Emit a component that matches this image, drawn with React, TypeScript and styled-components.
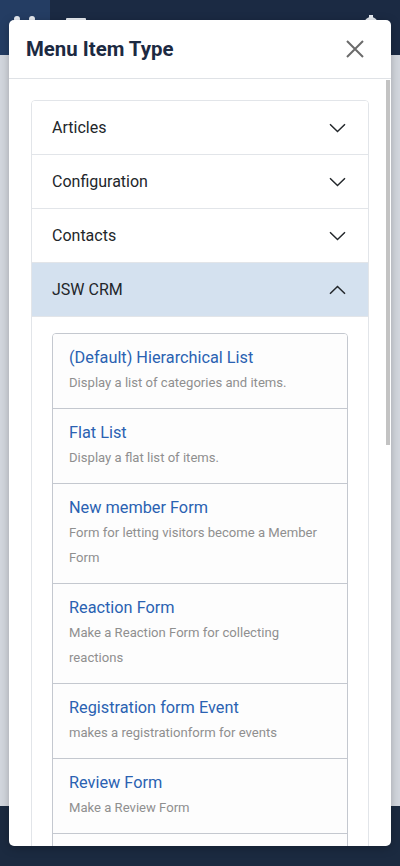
import React from "react";
import styled, { createGlobalStyle } from "styled-components";

const Global = createGlobalStyle`
  html, body { margin: 0; padding: 0; height: 866px; overflow: hidden; }
  body { font-family: Roboto, "Liberation Sans", Arial, sans-serif; }
  * { box-sizing: border-box; }
`;

const Page = styled.div`
  position: relative;
  width: 400px;
  height: 866px;
  display: flex;
  flex-direction: column;
  background: #d3d7de;
`;

const TopBar = styled.header`
  height: 55px;
  display: flex;
  align-items: flex-start;
  background: #1b2a43;
`;

const LogoBlock = styled.div`
  width: 50px;
  height: 100%;
  background: #243d63;
  display: flex;
  justify-content: center;
  padding-top: 15px;
`;

const TopSpacer = styled.div`
  flex: 1;
  display: flex;
  padding: 15px 0 0 14px;
`;

const GearSlot = styled.div`
  width: 50px;
  display: flex;
  justify-content: center;
  padding: 12px 8px 0 0;
`;

const Content = styled.main`
  flex: 1;
`;

const Footer = styled.footer`
  height: 60px;
  background: #1b2a40;
`;

const Modal = styled.div`
  position: absolute;
  top: 20px;
  left: 9px;
  width: 382px;
  height: 826px;
  background: #fff;
  border-radius: 5px;
  box-shadow: 0 2px 10px rgba(0, 0, 0, 0.25);
  display: flex;
  flex-direction: column;
  overflow: hidden;
`;

const ModalHeader = styled.div`
  height: 59px;
  flex: none;
  display: flex;
  align-items: center;
  justify-content: space-between;
  padding: 0 26px 0 17px;
  border-bottom: 1px solid #dfe2e6;
`;

const ModalTitle = styled.h2`
  margin: 0;
  font-size: 20.4px;
  font-weight: 700;
  color: #1c2a42;
`;

const CloseButton = styled.button`
  border: 0;
  background: none;
  padding: 0;
  width: 20px;
  height: 20px;
  display: flex;
  align-items: center;
  justify-content: center;
  cursor: pointer;
`;

const BodyFrame = styled.div`
  position: relative;
  flex: 1;
  min-height: 0;
  padding-right: 6px;
  overflow: hidden;
`;

const ModalBody = styled.div`
  height: 100%;
  overflow: hidden;
  padding: 21px 16px 20px 22px;
`;

const ScrollThumb = styled.div`
  position: absolute;
  top: 1px;
  right: 1px;
  width: 4px;
  height: 365px;
  background: #c3c3c3;
`;

const Accordion = styled.div`
  border: 1px solid #e2e5e9;
  border-radius: 4px;
  overflow: hidden;
`;

const Section = styled.div`
  & + & { border-top: 1px solid #e2e5e9; }
`;

const SectionHead = styled.div<{ $open?: boolean }>`
  height: 53px;
  display: flex;
  align-items: center;
  justify-content: space-between;
  padding: 0 22px 0 20px;
  background: ${(p) => (p.$open ? "#d4e1ef" : "#fff")};
  font-size: 16px;
  color: #22262a;
`;

const SectionBody = styled.div`
  padding: 16px 20px 17px 20px;
  border-top: 1px solid #e2e5e9;
`;

const ItemList = styled.div`
  border: 1px solid #c4c8cf;
  border-radius: 4px;
  overflow: hidden;
`;

const Item = styled.div`
  padding: 12px 16px 13px 16px;
  background: #fdfdfd;
  & + & { border-top: 1px solid #c4c8cf; }
`;

const ItemTitle = styled.div`
  font-size: 16.3px;
  line-height: 24px;
  color: #2a62b2;
`;

const ItemDesc = styled.div`
  font-size: 13.1px;
  line-height: 25px;
  color: #8f8f8f;
`;

const Chevron = ({ up }: { up?: boolean }) => (
  <svg width="17" height="10" viewBox="0 0 17 10" style={{ transform: up ? "rotate(180deg)" : undefined }}>
    <path d="M1 1.2 L8.5 8.5 L16 1.2" fill="none" stroke="#23272b" strokeWidth="1.5" />
  </svg>
);

const sections = ["Articles", "Configuration", "Contacts"];
const after = ["Menus", "News Feeds", "Smart Search", "System Links", "Tags", "Users", "Wrapper"];

const items = [
  { t: "(Default) Hierarchical List", d: "Display a list of categories and items." },
  { t: "Flat List", d: "Display a flat list of items." },
  { t: "New member Form", d: "Form for letting visitors become a Member Form" },
  { t: "Reaction Form", d: "Make a Reaction Form for collecting reactions" },
  { t: "Registration form Event", d: "makes a registrationform for events" },
  { t: "Review Form", d: "Make a Review Form" },
  { t: "Single Category", d: "Display a list of items of one category." },
  { t: "Single Item", d: "Display a single item." },
  { t: "Subscription Form", d: "Form for subscribing to the newsletter" },
  { t: "Unsubscribe Form", d: "Form for unsubscribing from the newsletter" },
];

export default function App() {
  return (
    <>
      <Global />
      <Page>
        <TopBar>
          <LogoBlock>
            <svg width="30" height="20" viewBox="0 0 30 20">
              <circle cx="7" cy="4" r="3" fill="#e8ecf2" />
              <circle cx="22" cy="4" r="3" fill="#e8ecf2" />
            </svg>
          </LogoBlock>
          <TopSpacer>
            <svg width="24" height="20" viewBox="0 0 24 20">
              <rect x="2" y="3" width="20" height="3" rx="1" fill="#e8ecf2" />
              <rect x="2" y="9" width="20" height="3" rx="1" fill="#e8ecf2" />
            </svg>
          </TopSpacer>
          <GearSlot>
            <svg width="20" height="20" viewBox="0 0 20 20">
              <circle cx="10" cy="12" r="7" fill="#e8ecf2" />
              <rect x="8" y="3" width="4" height="4" fill="#e8ecf2" />
            </svg>
          </GearSlot>
        </TopBar>
        <Content />
        <Footer />
        <Modal>
          <ModalHeader>
            <ModalTitle>Menu Item Type</ModalTitle>
            <CloseButton aria-label="Close">
              <svg width="18" height="18" viewBox="0 0 18 18">
                <path d="M1 1 L17 17 M17 1 L1 17" stroke="#6b6b6b" strokeWidth="2" />
              </svg>
            </CloseButton>
          </ModalHeader>
          <BodyFrame>
            <ModalBody>
              <Accordion>
                {sections.map((s) => (
                  <Section key={s}>
                    <SectionHead>
                      {s}
                      <Chevron />
                    </SectionHead>
                  </Section>
                ))}
                <Section>
                  <SectionHead $open>
                    JSW CRM
                    <Chevron up />
                  </SectionHead>
                  <SectionBody>
                    <ItemList>
                      {items.map((it) => (
                        <Item key={it.t}>
                          <ItemTitle>{it.t}</ItemTitle>
                          <ItemDesc>{it.d}</ItemDesc>
                        </Item>
                      ))}
                    </ItemList>
                  </SectionBody>
                </Section>
                {after.map((s) => (
                  <Section key={s}>
                    <SectionHead>
                      {s}
                      <Chevron />
                    </SectionHead>
                  </Section>
                ))}
              </Accordion>
            </ModalBody>
            <ScrollThumb />
          </BodyFrame>
        </Modal>
      </Page>
    </>
  );
}
